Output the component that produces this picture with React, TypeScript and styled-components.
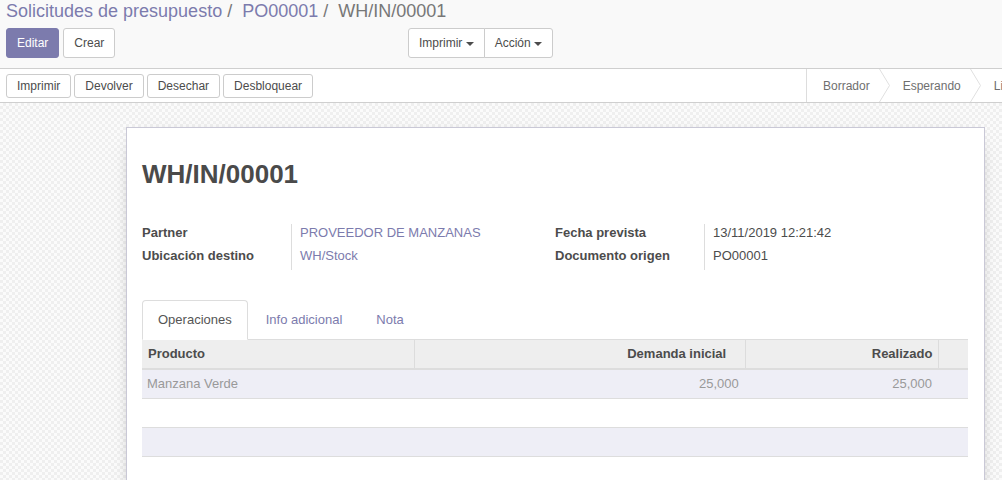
import React from "react";
import styled, { createGlobalStyle, css } from "styled-components";

const Global = createGlobalStyle`
  html, body { margin: 0; padding: 0; background: #fff; }
  body {
    font-family: "Liberation Sans", Arial, Helvetica, sans-serif;
    font-size: 13px;
    color: #4c4c4c;
    overflow: hidden;
  }
  * { box-sizing: border-box; }
`;

const Page = styled.div`
  width: 1002px;
  height: 480px;
  display: flex;
  flex-direction: column;
  overflow: hidden;
`;

const ControlPanel = styled.div`
  background: #f9f9f9;
  border-bottom: 1px solid #cfcfcf;
  padding: 0 6px 10px 6px;
`;

const Breadcrumb = styled.ol`
  list-style: none;
  margin: 0;
  padding: 0;
  display: flex;
  font-size: 18px;
  line-height: 22px;
  white-space: nowrap;
`;

const Crumb = styled.li<{ $active?: boolean }>`
  color: ${(p) => (p.$active ? "#777777" : "#7c7bad")};
  &:not(:first-child)::before {
    content: "/\\00a0";
    padding: 0 5px;
    color: #777777;
  }
`;

const CpRow = styled.div`
  display: flex;
  margin-top: 6px;
`;

const LeftButtons = styled.div`
  display: flex;
  gap: 4px;
  width: 402px;
`;

const Btn = styled.button<{ $primary?: boolean; $small?: boolean }>`
  font-family: inherit;
  font-size: 12px;
  line-height: 18px;
  padding: ${(p) => (p.$small ? "2px 10px" : "5px 10px")};
  border: 1px solid #cccccc;
  border-radius: 3px;
  background: #ffffff;
  color: #4c4c4c;
  white-space: nowrap;
  cursor: pointer;
  ${(p) =>
    p.$primary &&
    css`
      background: #7c7bad;
      border-color: #7c7bad;
      color: #ffffff;
    `}
`;

const BtnGroup = styled.div`
  display: flex;
  & > ${Btn} {
    border-radius: 0;
  }
  & > ${Btn}:first-child {
    border-radius: 3px 0 0 3px;
  }
  & > ${Btn}:last-child {
    border-radius: 0 3px 3px 0;
    margin-left: -1px;
  }
`;

const Caret = styled.span`
  display: inline-block;
  width: 0;
  height: 0;
  margin-left: 0;
  vertical-align: middle;
  border-top: 4px solid #4c4c4c;
  border-left: 4px solid transparent;
  border-right: 4px solid transparent;
`;

const StatusHeader = styled.div`
  display: flex;
  background: #ffffff;
  border-bottom: 1px solid #cfcfcf;
  height: 34px;
`;

const HeaderButtons = styled.div`
  flex: 1;
  display: flex;
  align-items: flex-start;
  gap: 3px;
  padding: 5px 6px 0 6px;
`;

const StatusBar = styled.div`
  flex: 0 0 196px;
  display: flex;
  align-items: stretch;
  border-left: 1px solid #dddddd;
  padding-left: 3px;
  overflow: hidden;
`;

const Stage = styled.div`
  display: flex;
  align-items: center;
  padding: 0 9px 0 13px;
  font-size: 12px;
  color: #6f6f6f;
  white-space: nowrap;
  flex: none;
`;

const ChevronSvg = styled.svg`
  flex: none;
  width: 11px;
  height: 33px;
  display: block;
`;

const Chevron = () => (
  <ChevronSvg viewBox="0 0 11 33">
    <polyline points="0.5,0 10.5,16.5 0.5,33" fill="none" stroke="#e0e0e0" strokeWidth="1" />
  </ChevronSvg>
);

const SheetBg = styled.div`
  flex: 1;
  padding: 24px 17px 0 126px;
  background: repeating-conic-gradient(#efefef 0% 25%, #fbfbfb 0% 50%) 0 0 / 6px 6px;
  overflow: hidden;
`;

const Sheet = styled.div`
  background: #ffffff;
  border: 1px solid #c9c8d6;
  box-shadow: 0 5px 20px -15px #000;
  padding: 32px 16px 40px 15px;
  min-height: 400px;
`;

const Title = styled.h1`
  margin: 0;
  font-size: 26px;
  line-height: 29px;
  font-weight: bold;
  color: #4a4a4a;
`;

const Groups = styled.div`
  display: grid;
  grid-template-columns: 1fr 1fr;
  margin-top: 35px;
`;

const FieldGroup = styled.div`
  display: grid;
  grid-template-columns: 150px 1fr;
`;

const Label = styled.div`
  font-weight: bold;
  line-height: 18px;
  padding: 0 0 5px 0;
  border-right: 1px solid #dddddd;
  white-space: nowrap;
`;

const Value = styled.div<{ $link?: boolean }>`
  line-height: 18px;
  padding: 0 0 5px 8px;
  color: ${(p) => (p.$link ? "#7c7bad" : "#4c4c4c")};
  white-space: nowrap;
`;

const NavTabs = styled.ul`
  list-style: none;
  margin: 30px 0 0 0;
  padding: 0;
  display: flex;
  border-bottom: 1px solid #dddddd;
`;

const Tab = styled.li<{ $active?: boolean }>`
  margin: 0 2px -1px 0;
  padding: 10px 15px;
  line-height: 18px;
  border: 1px solid transparent;
  border-radius: 4px 4px 0 0;
  color: #7c7bad;
  ${(p) =>
    p.$active &&
    css`
      color: #555555;
      background: #ffffff;
      border-color: #dddddd #dddddd transparent;
    `}
`;

const Table = styled.table`
  width: 100%;
  border-collapse: collapse;
  table-layout: fixed;
`;

const Th = styled.th<{ $num?: boolean; $pr?: number }>`
  background: #eeeeee;
  font-weight: bold;
  line-height: 18px;
  padding: 5px ${(p) => p.$pr ?? 5}px 5px 6px;
  text-align: ${(p) => (p.$num ? "right" : "left")};
  border-bottom: 2px solid #dddddd;
  & + & {
    border-left: 1px solid #dcdcdc;
  }
`;

const Tr = styled.tr<{ $striped?: boolean }>`
  background: ${(p) => (p.$striped ? "#eeeef6" : "#ffffff")};
  border-bottom: 1px solid #dddddd;
`;

const Td = styled.td<{ $num?: boolean }>`
  line-height: 18px;
  padding: ${(p) => (p.$num ? "5px 7px 5px 5px" : "5px")};
  text-align: ${(p) => (p.$num ? "right" : "left")};
  color: #999999;
`;

const EmptyRow = ({ striped }: { striped?: boolean }) => (
  <Tr $striped={striped}>
    <Td>{"\u00a0"}</Td>
    <Td />
    <Td />
    <Td />
  </Tr>
);

export default function App() {
  return (
    <>
      <Global />
      <Page>
        <ControlPanel>
          <Breadcrumb>
            <Crumb>Solicitudes de presupuesto</Crumb>
            <Crumb>PO00001</Crumb>
            <Crumb $active>WH/IN/00001</Crumb>
          </Breadcrumb>
          <CpRow>
            <LeftButtons>
              <Btn $primary>Editar</Btn>
              <Btn>Crear</Btn>
            </LeftButtons>
            <BtnGroup>
              <Btn>
                Imprimir <Caret />
              </Btn>
              <Btn>
                Acción <Caret />
              </Btn>
            </BtnGroup>
          </CpRow>
        </ControlPanel>
        <StatusHeader>
          <HeaderButtons>
            <Btn $small>Imprimir</Btn>
            <Btn $small>Devolver</Btn>
            <Btn $small>Desechar</Btn>
            <Btn $small>Desbloquear</Btn>
          </HeaderButtons>
          <StatusBar>
            <Stage>Borrador</Stage>
            <Chevron />
            <Stage>Esperando</Stage>
            <Chevron />
            <Stage>Listo</Stage>
          </StatusBar>
        </StatusHeader>
        <SheetBg>
          <Sheet>
            <Title>WH/IN/00001</Title>
            <Groups>
              <FieldGroup>
                <Label>Partner</Label>
                <Value $link>PROVEEDOR DE MANZANAS</Value>
                <Label>Ubicación destino</Label>
                <Value $link>WH/Stock</Value>
              </FieldGroup>
              <FieldGroup>
                <Label>Fecha prevista</Label>
                <Value>13/11/2019 12:21:42</Value>
                <Label>Documento origen</Label>
                <Value>PO00001</Value>
              </FieldGroup>
            </Groups>
            <NavTabs>
              <Tab $active>Operaciones</Tab>
              <Tab>Info adicional</Tab>
              <Tab>Nota</Tab>
            </NavTabs>
            <Table>
              <colgroup>
                <col style={{ width: 272 }} />
                <col style={{ width: 331 }} />
                <col style={{ width: 193 }} />
                <col style={{ width: 29 }} />
              </colgroup>
              <thead>
                <tr>
                  <Th>Producto</Th>
                  <Th $num $pr={19}>Demanda inicial</Th>
                  <Th $num $pr={6}>Realizado</Th>
                  <Th />
                </tr>
              </thead>
              <tbody>
                <Tr $striped>
                  <Td>Manzana Verde</Td>
                  <Td $num>25,000</Td>
                  <Td $num>25,000</Td>
                  <Td />
                </Tr>
                <EmptyRow />
                <EmptyRow striped />
              </tbody>
            </Table>
          </Sheet>
        </SheetBg>
      </Page>
    </>
  );
}
